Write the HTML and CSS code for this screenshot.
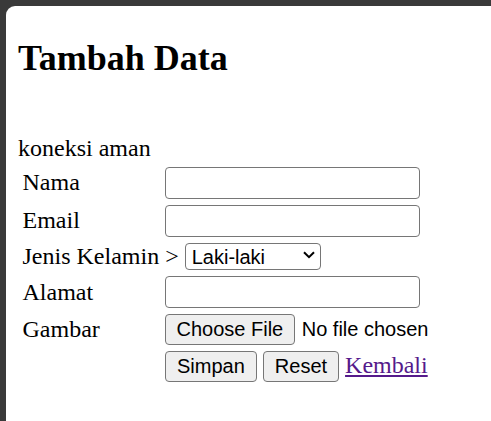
FILE: index.html
```html
<!DOCTYPE html>
<html lang="id">
<head>
<meta charset="utf-8">
<title>Tambah Data</title>
<link rel="stylesheet" href="styles.css">
</head>
<body>
<div class="page">
  <h2 class="title">Tambah Data</h2>
  <form class="form" action="#" onsubmit="return false">
    <p class="status">koneksi aman</p>
    <table class="grid">
      <colgroup>
        <col class="col-label">
        <col class="col-input">
      </colgroup>
      <tr>
        <td class="label">Nama</td>
        <td><input class="field" type="text" name="nama"></td>
      </tr>
      <tr>
        <td class="label">Email</td>
        <td><input class="field" type="text" name="email"></td>
      </tr>
      <tr>
        <td colspan="2">Jenis Kelamin &gt; <span class="select-wrap"><select class="choice" name="jk"><option>Laki-laki</option><option>Perempuan</option></select><svg class="chevron" width="12" height="8" viewBox="0 0 12 8" aria-hidden="true"><path d="M1 1.2 L6 6.2 L11 1.2" fill="none" stroke="#000" stroke-width="2"/></svg></span></td>
      </tr>
      <tr>
        <td class="label">Alamat</td>
        <td><input class="field" type="text" name="alamat"></td>
      </tr>
      <tr>
        <td class="label">Gambar</td>
        <td><input class="file" type="file" name="gambar"></td>
      </tr>
      <tr>
        <td class="label"></td>
        <td><button class="btn" type="submit">Simpan</button> <button class="btn" type="reset">Reset</button> <a class="back" href="#">Kembali</a></td>
      </tr>
    </table>
  </form>
</div>
</body>
</html>
```
FILE: styles.css
```css
html, body {
  margin: 0;
  padding: 0;
}
body {
  background: #3a3a3a;
  font-family: "Liberation Serif", "Times New Roman", serif;
  font-size: 24px;
  color: #000;
}
.page {
  box-sizing: border-box;
  margin: 6px 0 0 6px;
  padding: 1px 12px 0;
  min-height: calc(100vh - 6px);
  background: #fff;
  border-top-left-radius: 9px;
}
.title {
  font-size: 36px;
  font-weight: bold;
  margin: 30px 0 30px;
}
.form {
  margin: 0;
}
.status {
  margin: 56px 0 0;
}
.grid {
  table-layout: fixed;
  width: 406.5px;
  border-spacing: 3px;
  margin: 0;
}
.col-label {
  width: 139.5px;
}
.col-input {
  width: 258px;
}
.grid td {
  padding: 1.5px;
  vertical-align: middle;
  white-space: nowrap;
}
.field {
  display: block;
  box-sizing: border-box;
  width: 255px;
  height: 32px;
  margin: 0;
  padding: 1px 3px;
  border: 1px solid #767676;
  border-radius: 4px;
  background: #fff;
  font-family: "Liberation Sans", Arial, sans-serif;
  font-size: 20px;
}
.select-wrap {
  position: relative;
  display: inline-block;
}
.choice {
  -webkit-appearance: none;
  appearance: none;
  box-sizing: border-box;
  width: 136px;
  height: 27px;
  margin: 0;
  padding: 0 24px 0 6px;
  border: 1px solid #767676;
  border-radius: 4px;
  background-color: #fff;
  color: #000;
  font-family: "Liberation Sans", Arial, sans-serif;
  font-size: 20px;
}
.chevron {
  position: absolute;
  right: 6px;
  top: 50%;
  margin-top: -5px;
  pointer-events: none;
}
.file {
  width: 264px;
  margin: 0;
  font-family: "Liberation Sans", Arial, sans-serif;
  font-size: 20px;
  color: #000;
}
.file::file-selector-button {
  box-sizing: border-box;
  height: 31px;
  margin: 0 7px 0 0;
  padding: 0 10.5px;
  border: 1px solid #767676;
  border-radius: 4px;
  background: #efefef;
  color: #000;
  font-family: "Liberation Sans", Arial, sans-serif;
  font-size: 20px;
}
.btn {
  box-sizing: border-box;
  height: 31px;
  margin: 0;
  padding: 0 11px;
  border: 1px solid #767676;
  border-radius: 4px;
  background: #efefef;
  color: #000;
  font-family: "Liberation Sans", Arial, sans-serif;
  font-size: 20px;
}
.back {
  color: #551a8b;
  text-decoration: underline;
}
```
